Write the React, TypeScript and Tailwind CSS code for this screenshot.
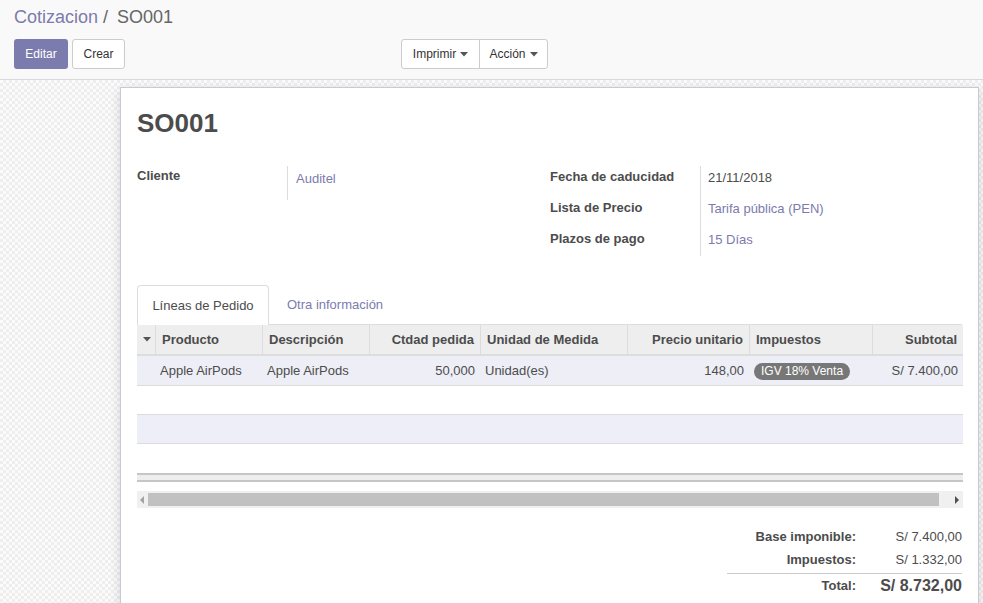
const font = { fontFamily: '"Liberation Sans", Arial, sans-serif' }

function Caret() {
  return (
    <svg className="ml-1 inline-block" width="8" height="5" viewBox="0 0 8 5">
      <path d="M0 0h8L4 4.5z" fill="#555" />
    </svg>
  )
}

const cols = [
  { w: 'w-[18px]', label: '', align: 'text-left' },
  { w: 'w-[107px]', label: 'Producto', align: 'text-left' },
  { w: 'w-[107px]', label: 'Descripción', align: 'text-left' },
  { w: 'w-[111px]', label: 'Ctdad pedida', align: 'text-right' },
  { w: 'w-[147px]', label: 'Unidad de Medida', align: 'text-left' },
  { w: 'w-[122px]', label: 'Precio unitario', align: 'text-right' },
  { w: 'w-[123px]', label: 'Impuestos', align: 'text-left' },
  { w: 'w-[91px]', label: 'Subtotal', align: 'text-right' },
]

export default function App() {
  return (
    <div style={font} className="h-[603px] w-[983px] overflow-hidden text-[13px] text-[#4c4c4c]">
      {/* control panel */}
      <div className="h-[80px] border-b border-[#d9d9d9] bg-[#f9f9f9] px-[14px] pt-[6px]">
        <div className="flex h-[22px] items-center text-[18px]">
          <span className="text-[#7c7bad]">Cotizacion</span>
          <span className="ml-[5px] text-[#666]">/</span>
          <span className="ml-[9px] text-[#666]">SO001</span>
        </div>
        <div className="mt-[11px] flex h-[30px] items-center">
          <button className="h-[30px] w-[54px] rounded-[3px] bg-[#7c7bad] text-[12px] text-white">Editar</button>
          <button className="ml-[4px] h-[30px] w-[53px] rounded-[3px] border border-[#ccc] bg-white text-[12px] text-[#333]">Crear</button>
          <div className="ml-[276px] flex h-[30px]">
            <button className="flex h-[30px] w-[79px] items-center justify-center rounded-l-[3px] border border-[#ccc] bg-white text-[12px] text-[#333]">
              Imprimir
              <Caret />
            </button>
            <button className="-ml-px flex h-[30px] w-[69px] items-center justify-center rounded-r-[3px] border border-[#ccc] bg-white text-[12px] text-[#333]">
              Acción
              <Caret />
            </button>
          </div>
        </div>
      </div>

      {/* content area */}
      <div className="h-[523px] bg-[repeating-conic-gradient(#eeeeee_0_25%,#fbfbfb_0_50%)] bg-[length:6px_6px] pt-[7px]">
        <div className="ml-[120px] mr-[4px] h-[520px] border border-[#c9c9d6] bg-white px-[16px] shadow-[0_3px_10px_rgba(0,0,0,0.15)]">
          <h1 className="mt-[19px] text-[26px] font-bold leading-[32px] text-[#4c4c4c]">SO001</h1>

          <div className="mt-[27px] flex">
            <div className="flex w-[413px]">
              <div className="w-[150px] font-bold">Cliente</div>
              <div className="h-[34px] border-l border-[#ddd] pl-[8px] pt-[3px] text-[#7c7bad]">Auditel</div>
            </div>
            <div className="flex">
              <div className="w-[150px] pt-[3px] font-bold leading-[31px]">
                <div className="-mt-[8px]">Fecha de caducidad</div>
                <div>Lista de Precio</div>
                <div>Plazos de pago</div>
              </div>
              <div className="h-[90px] border-l border-[#ddd] pl-[7px] pt-[3px] leading-[31px]">
                <div className="-mt-[7px]">21/11/2018</div>
                <div className="text-[#7c7bad]">Tarifa pública (PEN)</div>
                <div className="text-[#7c7bad]">15 Días</div>
              </div>
            </div>
          </div>

          {/* tabs */}
          <div className="mt-[29px] flex h-[40px] border-b border-[#ddd]">
            <div className="-mb-px flex h-[40px] w-[132px] items-center justify-center rounded-t-[4px] border border-b-0 border-[#ddd] bg-white text-[#4c4c4c]">
              Líneas de Pedido
            </div>
            <div className="flex items-center pl-[18px] text-[#7c7bad]">Otra información</div>
          </div>

          {/* table */}
          <div className="w-[826px]">
            <div className="flex h-[31px] border-b-2 border-[#ddd] bg-[#eeeeee] font-bold">
              {cols.map((c, i) =>
                i === 0 ? (
                  <div key={i} className="flex h-full w-[18px] shrink-0 items-center pl-[6px]">
                    <svg className="shrink-0" width="8" height="5" viewBox="0 0 8 5">
                      <path d="M0 0h8L4 4.5z" fill="#555" />
                    </svg>
                  </div>
                ) : (
                  <div
                    key={i}
                    className={`${c.w} ${c.align} flex h-full items-center border-l border-[#dcdcdc] px-[6px] ${c.align === 'text-right' ? 'justify-end' : ''}`}
                  >
                    {c.label}
                  </div>
                )
              )}
            </div>
            <div className="flex h-[30px] items-center border-b border-[#ddd] bg-[#eeeef6]">
              <div className="w-[18px]" />
              <div className="w-[107px] px-[5px]">Apple AirPods</div>
              <div className="w-[107px] px-[5px]">Apple AirPods</div>
              <div className="w-[111px] px-[5px] text-right">50,000</div>
              <div className="w-[147px] px-[5px]">Unidad(es)</div>
              <div className="w-[122px] px-[5px] text-right">148,00</div>
              <div className="w-[123px] px-[5px]">
                <span className="inline-block h-[17px] rounded-full bg-[#777] px-[7px] text-[12px] leading-[17px] text-white">
                  IGV 18% Venta
                </span>
              </div>
              <div className="w-[91px] px-[5px] text-right">S/ 7.400,00</div>
            </div>
            <div className="h-[29px] border-b border-[#ddd] bg-white" />
            <div className="h-[29px] border-b border-[#ddd] bg-[#eeeef8]" />
            <div className="h-[29px] bg-white" />
            <div className="h-[9px] border-y-2 border-[#c6c6c6] bg-[#eeeeee]" />
            <div className="mt-[9px] flex h-[17px] items-center bg-[#f0f0f0] px-[3px]">
              <svg width="6" height="8" viewBox="0 0 6 8">
                <path d="M4 0v8L0 4z" fill="#a3a3a3" />
              </svg>
              <div className="ml-[2px] mr-[15px] h-[13px] flex-1 bg-[#c1c1c1]" />
              <svg width="6" height="8" viewBox="0 0 6 8">
                <path d="M1 0v8L5 4z" fill="#505050" />
              </svg>
            </div>
          </div>

          {/* totals */}
          <div className="mt-[17px] flex justify-end">
            <div className="w-[235px]">
              <div className="flex h-[23px] items-center">
                <div className="flex-1 text-right font-bold">Base imponible:</div>
                <div className="w-[106px] text-right">S/ 7.400,00</div>
              </div>
              <div className="flex h-[23px] items-center">
                <div className="flex-1 text-right font-bold">Impuestos:</div>
                <div className="w-[106px] text-right">S/ 1.332,00</div>
              </div>
              <div className="mt-[2px] flex h-[24px] items-center border-t border-[#ccc]">
                <div className="flex-1 text-right font-bold">Total:</div>
                <div className="w-[106px] text-right text-[16px] font-bold">S/ 8.732,00</div>
              </div>
            </div>
          </div>
        </div>
      </div>
    </div>
  )
}
